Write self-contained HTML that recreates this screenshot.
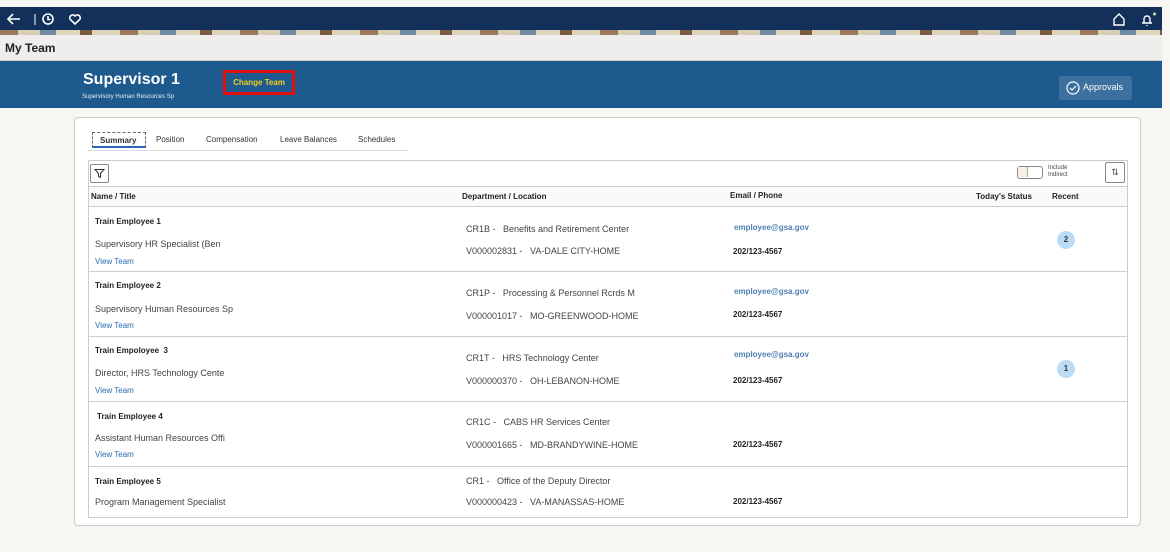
<!DOCTYPE html>
<html><head><meta charset="utf-8"><style>
*{margin:0;padding:0;box-sizing:border-box}
body{width:1170px;height:552px;background:#f7f6f3;font-family:"Liberation Sans",Arial,sans-serif;position:relative;overflow:hidden;color:#333}
.a{position:absolute}
.nav{top:7px;left:0;width:1162px;height:23px;background:#13305a}
.band{top:30px;left:0;width:1162px;height:5px;background:repeating-linear-gradient(90deg,#9a7a5a 0 18px,#d8cdb5 18px 40px,#6d8aa0 40px 56px,#e0d6c0 56px 80px,#7a5a40 80px 92px,#ddd2bc 92px 120px)}
.myteam{top:35px;left:0;width:1162px;height:26px;background:#efeeec;border-bottom:1px solid #ccc;font-weight:bold;font-size:12px;color:#222;padding:6px 5px}
.banner{top:61px;left:0;width:1162px;height:47px;background:#1f5a8e}
.card{top:117px;left:74px;width:1067px;height:409px;background:#fff;border:1px solid #ccc;border-radius:4px}
.tab{font-size:8px;color:#333;top:135px}
.row{left:88px;width:1040px;border:1px solid #ccc;border-top:none;background:#fff}
.b{font-weight:bold;font-size:8px;color:#222}
.t{font-size:9px;color:#444}
.l{font-size:8px;color:#2b6cb0}
.e{font-size:8px;color:#4e7fb4;font-weight:bold}
.badge{width:18px;height:18px;border-radius:50%;background:#bcdcf5;font-size:8px;font-weight:bold;text-align:center;line-height:18px;color:#333}
</style></head><body>
<div class="a nav"></div>
<svg class="a" style="left:5px;top:12px" width="80" height="14" viewBox="0 0 80 14" fill="none" stroke="#fff" stroke-width="1.6"><path d="M15 7H3M8 2L3 7l5 5"/><path d="M30 2v11" stroke-width="1"/><circle cx="43" cy="7" r="5"/><path d="M43 4v3.5h2.5"/><path d="M70 12L65 7.2a3 3 0 0 1 5-3.2 3 3 0 0 1 5 3.2z"/></svg>
<svg class="a" style="left:1112px;top:11px" width="46" height="16" viewBox="0 0 46 16" fill="none" stroke="#fff" stroke-width="1.4"><path d="M2 8l5-5 5 5v6H2z"/><path d="M30 12h10M32 12V8a3 3 0 0 1 6 0v4M35 14v1"/><circle cx="42.5" cy="3" r="1.5" fill="#c8e6a0" stroke="none"/></svg>
<div class="a band"></div>
<div class="a myteam">My Team</div>
<div class="a banner"></div>
<div class="a" style="left:83px;top:71px;font-size:16px;font-weight:bold;color:#fff">Supervisor 1</div>
<div class="a" style="left:82px;top:94px;font-size:6px;color:#e8eef5">Supervisory Human Resources Sp</div>
<div class="a" style="left:223px;top:70px;width:72px;height:25px;border:3px solid #e01010;font-size:8px;color:#f2d020;text-align:center;line-height:19px;font-weight:bold">Change Team</div>
<div class="a" style="left:1059px;top:76px;width:73px;height:24px;background:#3c709e;border-radius:3px;font-size:9px;color:#fff;padding:6px 0 0 24px">Approvals</div>
<svg class="a" style="left:1066px;top:81px" width="14" height="14" viewBox="0 0 14 14" fill="none" stroke="#fff" stroke-width="1.2"><circle cx="7" cy="7" r="6"/><path d="M4 7l2 2 4-4"/></svg>
<div class="a card"></div>
<div class="a" style="left:92px;top:132px;width:54px;height:16px;border:1px dashed #666;border-bottom:2px solid #2b6cb0"></div>
<div class="a tab" style="left:100px;font-weight:bold;top:136px">Summary</div>
<div class="a tab" style="left:156px">Position</div>
<div class="a tab" style="left:206px">Compensation</div>
<div class="a tab" style="left:280px">Leave Balances</div>
<div class="a tab" style="left:358px">Schedules</div>
<div class="a" style="left:88px;top:150px;width:320px;height:1px;background:#ddd"></div>
<div class="a" style="left:88px;top:160px;width:1040px;height:27px;border:1px solid #ccc;background:#fff"></div>
<div class="a" style="left:90px;top:164px;width:19px;height:19px;border:1px solid #888;border-radius:2px"></div>
<svg class="a" style="left:94px;top:168px" width="11" height="11" viewBox="0 0 11 11" fill="none" stroke="#333"><path d="M1 1.5h9L6.5 5.5v4l-2-1v-3z"/></svg>
<div class="a" style="left:1017px;top:166px;width:26px;height:13px;border:1.5px solid #888;border-radius:3px;background:#fff"><div style="width:10px;height:10px;background:#f5efe4;border-right:1px solid #aaa"></div></div>
<div class="a" style="left:1048px;top:165px;font-size:6px;color:#444;line-height:7px">Include<br>Indirect</div>
<div class="a" style="left:1105px;top:162px;width:20px;height:21px;border:1px solid #888;border-radius:2px;font-size:9px;text-align:center;line-height:19px;color:#444">⇅</div>
<div class="a row" style="top:187px;height:20px;background:#fafafa"></div>
<div class="a b" style="left:91px;top:192px">Name / Title</div>
<div class="a b" style="left:462px;top:192px">Department / Location</div>
<div class="a b" style="left:730px;top:191px">Email / Phone</div>
<div class="a b" style="left:976px;top:192px">Today's Status</div>
<div class="a b" style="left:1052px;top:192px">Recent</div>

<div class="a row" style="top:207px;height:65px"></div>
<div class="a row" style="top:272px;height:65px"></div>
<div class="a row" style="top:337px;height:65px"></div>
<div class="a row" style="top:402px;height:65px"></div>
<div class="a row" style="top:467px;height:51px"></div>

<div class="a b" style="left:95px;top:217px">Train Employee 1</div>
<div class="a t" style="left:95px;top:239px">Supervisory HR Specialist (Ben</div>
<div class="a l" style="left:95px;top:257px">View Team</div>
<div class="a t" style="left:466px;top:224px">CR1B -&nbsp;&nbsp;&nbsp;Benefits and Retirement Center</div>
<div class="a t" style="left:466px;top:246px">V000002831 -&nbsp;&nbsp;&nbsp;VA-DALE CITY-HOME</div>
<div class="a e" style="left:734px;top:223px">employee@gsa.gov</div>
<div class="a b" style="left:733px;top:247px">202/123-4567</div>
<div class="a badge" style="left:1057px;top:231px">2</div>

<div class="a b" style="left:95px;top:281px">Train Employee 2</div>
<div class="a t" style="left:95px;top:304px">Supervisory Human Resources Sp</div>
<div class="a l" style="left:95px;top:321px">View Team</div>
<div class="a t" style="left:466px;top:288px">CR1P -&nbsp;&nbsp;&nbsp;Processing &amp; Personnel Rcrds M</div>
<div class="a t" style="left:466px;top:311px">V000001017 -&nbsp;&nbsp;&nbsp;MO-GREENWOOD-HOME</div>
<div class="a e" style="left:734px;top:287px">employee@gsa.gov</div>
<div class="a b" style="left:733px;top:310px">202/123-4567</div>

<div class="a b" style="left:95px;top:346px">Train Empoloyee&nbsp; 3</div>
<div class="a t" style="left:95px;top:368px">Director, HRS Technology Cente</div>
<div class="a l" style="left:95px;top:386px">View Team</div>
<div class="a t" style="left:466px;top:353px">CR1T -&nbsp;&nbsp;&nbsp;HRS Technology Center</div>
<div class="a t" style="left:466px;top:376px">V000000370 -&nbsp;&nbsp;&nbsp;OH-LEBANON-HOME</div>
<div class="a e" style="left:734px;top:350px">employee@gsa.gov</div>
<div class="a b" style="left:733px;top:376px">202/123-4567</div>
<div class="a badge" style="left:1057px;top:360px">1</div>

<div class="a b" style="left:97px;top:412px">Train Employee 4</div>
<div class="a t" style="left:95px;top:433px">Assistant Human Resources Offi</div>
<div class="a l" style="left:95px;top:450px">View Team</div>
<div class="a t" style="left:466px;top:417px">CR1C -&nbsp;&nbsp;&nbsp;CABS HR Services Center</div>
<div class="a t" style="left:466px;top:440px">V000001665 -&nbsp;&nbsp;&nbsp;MD-BRANDYWINE-HOME</div>
<div class="a b" style="left:733px;top:440px">202/123-4567</div>

<div class="a b" style="left:95px;top:477px">Train Employee 5</div>
<div class="a t" style="left:95px;top:497px">Program Management Specialist</div>
<div class="a t" style="left:466px;top:476px">CR1 -&nbsp;&nbsp;&nbsp;Office of the Deputy Director</div>
<div class="a t" style="left:466px;top:497px">V000000423 -&nbsp;&nbsp;&nbsp;VA-MANASSAS-HOME</div>
<div class="a b" style="left:733px;top:497px">202/123-4567</div>
</body></html>
